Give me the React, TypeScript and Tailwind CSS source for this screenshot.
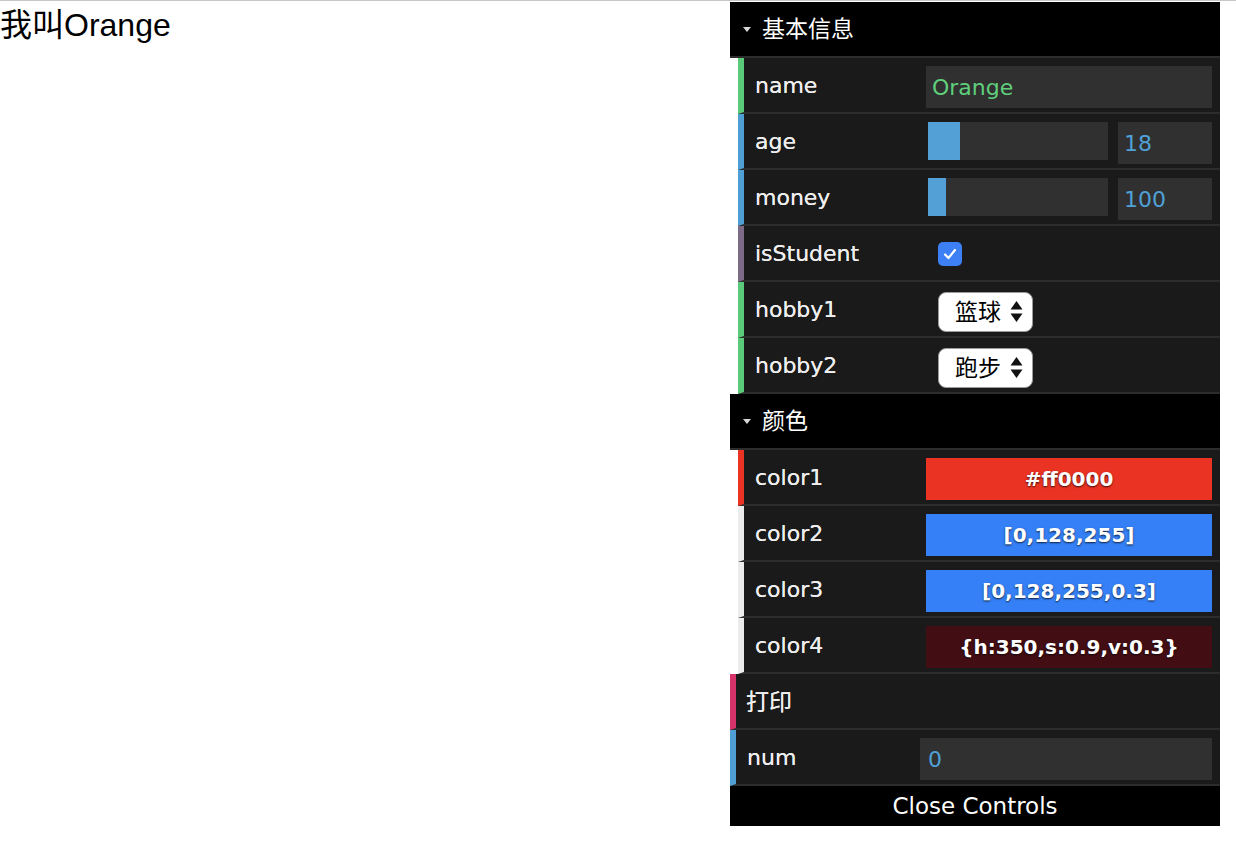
import type { ReactNode } from "react";

const FONT = "font-['DejaVu_Sans','Noto_Sans_CJK_SC',sans-serif]";

// one controller line of the panel
const Row = ({
  border,
  label,
  labelW = "w-[171px]",
  cjk = false,
  children,
}: {
  border: string;
  label: string;
  labelW?: string;
  cjk?: boolean;
  children?: ReactNode;
}) => (
  <div
    className={`flex h-[56px] border-l-[6px] border-b-2 border-b-[#2c2c2c] bg-[#1a1a1a] pl-[11px] pr-[8px] ${border}`}
  >
    <div
      className={`${labelW} shrink-0 pt-[2px] leading-[52px] text-[#eeeeee] [text-shadow:0_0_0.4px_#eeeeee] ${cjk ? "text-[23px] -ml-px" : "text-[22px]"}`}
    >
      {label}
    </div>
    <div className="flex-1 min-w-0">{children}</div>
  </div>
);

const FolderTitle = ({ title }: { title: string }) => (
  <div className="flex h-[56px] items-center border-b-2 border-b-[#2c2c2c] bg-black pl-[13px]">
    <svg width="8" height="5" viewBox="0 0 8 5" className="mt-[1px]">
      <polygon points="0,0 8,0 4,5" fill="#d8d8d8" />
    </svg>
    <span className="ml-[11px] text-[23px] leading-none text-white">{title}</span>
  </div>
);

const Slider = ({ pct, value }: { pct: number; value: string }) => (
  <div className="flex pt-[8px]">
    <div className="ml-[2px] h-[38px] w-[180px] bg-[#303030]">
      <div className="h-full bg-[#52a0d5]" style={{ width: `${pct}%` }} />
    </div>
    <div className="ml-[10px] flex h-[42px] flex-1 items-center bg-[#303030] pl-[6px] text-[22px] text-[#4fa0d6]">
      {value}
    </div>
  </div>
);

const Select = ({ value }: { value: string }) => (
  <div className="ml-[12px] mt-[10px] flex h-[40px] w-[95px] items-center rounded-[8px] border border-[#9a9a9a] bg-white pl-[16px] text-[23px] text-black">
    <span className="leading-none">{value}</span>
    <svg width="13" height="22" viewBox="0 0 13 22" className="ml-[9px]">
      <polygon points="6.5,0 12.5,8.5 0.5,8.5" fill="#111" />
      <polygon points="0.5,12.5 12.5,12.5 6.5,21" fill="#111" />
    </svg>
  </div>
);

const Swatch = ({ bg, text }: { bg: string; text: string }) => (
  <div className="pt-[8px]">
    <div
      className={`flex h-[42px] items-center justify-center text-[20px] font-bold text-white [text-shadow:0_1px_2px_rgba(0,0,0,0.75)] ${bg}`}
    >
      {text}
    </div>
  </div>
);

export default function App() {
  return (
    <div className={`flex min-h-[858px] border-t border-[#c6c6c6] bg-white ${FONT}`}>
      <div className="flex-1 pt-[6px] font-['Liberation_Sans','Noto_Sans_CJK_SC',sans-serif] text-[32px] leading-[37px] text-black">
        我叫Orange
      </div>

      <div className="mr-[16px] mt-px w-[490px] self-start">
        <FolderTitle title="基本信息" />
        <div className="ml-[8px]">
          <Row border="border-l-[#5bc97a]" label="name">
            <div className="pt-[8px]">
              <div className="flex h-[42px] items-center bg-[#303030] pl-[6px] text-[22px] text-[#5fcf7c]">
                Orange
              </div>
            </div>
          </Row>
          <Row border="border-l-[#4f9fd4]" label="age">
            <Slider pct={18} value="18" />
          </Row>
          <Row border="border-l-[#4f9fd4]" label="money">
            <Slider pct={10} value="100" />
          </Row>
          <Row border="border-l-[#7d6a86]" label="isStudent">
            <div className="ml-[12px] mt-[16px] flex h-[24px] w-[24px] items-center justify-center rounded-[5px] bg-[#3d80f5]">
              <svg width="16" height="16" viewBox="0 0 16 16">
                <polyline
                  points="3,8.5 6.5,12 13,4"
                  fill="none"
                  stroke="white"
                  strokeWidth="2.2"
                  strokeLinecap="round"
                  strokeLinejoin="round"
                />
              </svg>
            </div>
          </Row>
          <Row border="border-l-[#5bc97a]" label="hobby1">
            <Select value="篮球" />
          </Row>
          <Row border="border-l-[#5bc97a]" label="hobby2">
            <Select value="跑步" />
          </Row>
        </div>

        <FolderTitle title="颜色" />
        <div className="ml-[8px]">
          <Row border="border-l-[#ea3323]" label="color1">
            <Swatch bg="bg-[#ea3323]" text="#ff0000" />
          </Row>
          <Row border="border-l-[#ececec]" label="color2">
            <Swatch bg="bg-[#3580f6]" text="[0,128,255]" />
          </Row>
          <Row border="border-l-[#ececec]" label="color3">
            <Swatch bg="bg-[#3580f6]" text="[0,128,255,0.3]" />
          </Row>
          <Row border="border-l-[#ececec]" label="color4">
            <Swatch bg="bg-[#420e14]" text="{h:350,s:0.9,v:0.3}" />
          </Row>
        </div>

        <Row border="border-l-[#d6336a]" label="打印" cjk />
        <Row border="border-l-[#4f9fd4]" label="num" labelW="w-[173px]">
          <div className="pt-[8px]">
            <div className="flex h-[42px] items-center bg-[#303030] pl-[8px] text-[22px] text-[#4fa0d6]">
              0
            </div>
          </div>
        </Row>

        <div className="flex h-[40px] items-center justify-center bg-black text-[23px] text-white">
          Close Controls
        </div>
      </div>
    </div>
  );
}
